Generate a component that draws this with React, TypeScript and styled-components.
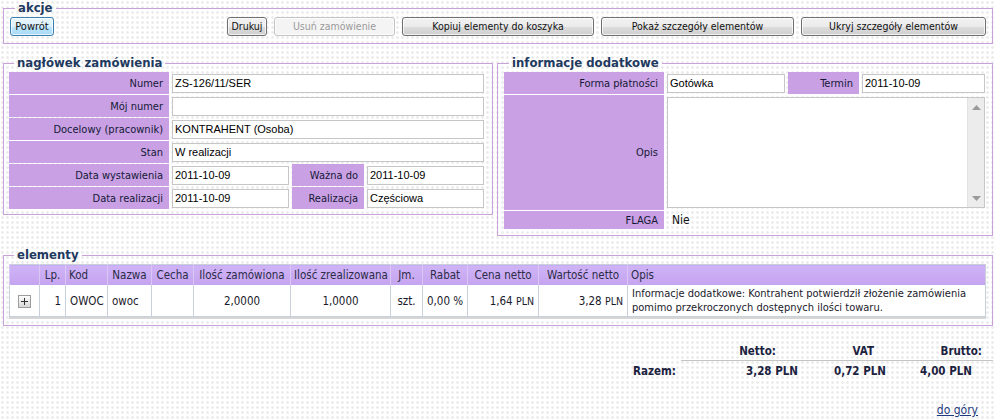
import React from 'react';
import styled, { createGlobalStyle } from 'styled-components';

const GlobalStyle = createGlobalStyle`
  html, body {
    margin: 0;
    padding: 0;
  }
  body {
    background-color: #ffffff;
    background-image: radial-gradient(circle, #ececec 1.1px, transparent 1.6px);
    background-size: 5px 5px;
    font-family: 'DejaVu Sans Condensed', 'DejaVu Sans', sans-serif;
    font-size: 11px;
    color: #1b2240;
  }
`;

const columns = [
  { title: '', w: 30 },
  { title: 'Lp.', w: 26 },
  { title: 'Kod', w: 42 },
  { title: 'Nazwa', w: 44 },
  { title: 'Cecha', w: 42 },
  { title: 'Ilość zamówiona', w: 97 },
  { title: 'Ilość zrealizowana', w: 100 },
  { title: 'Jm.', w: 32 },
  { title: 'Rabat', w: 45 },
  { title: 'Cena netto', w: 71 },
  { title: 'Wartość netto', w: 89 },
  { title: 'Opis', w: 358 },
];

const App: React.FC = () => {
  return (
    <Page>
      <GlobalStyle />

      <Group>
        <Caption>akcje</Caption>
        <Toolbar>
          <Button $w={44} $variant="focus">Powrót</Button>
          <Button $w={40} $push>Drukuj</Button>
          <Button $w={121} $variant="disabled">Usuń zamówienie</Button>
          <Button $w={192}>Kopiuj elementy do koszyka</Button>
          <Button $w={193}>Pokaż szczegóły elementów</Button>
          <Button $w={185}>Ukryj szczegóły elementów</Button>
        </Toolbar>
      </Group>

      <FormsRow>
        <Group $w={490} $pad="1px 8px 5px 5px">
          <Caption>nagłówek zamówienia</Caption>
          <FormGrid $cols="160px 117px 72px 1fr" $rows="repeat(6, 22px)">
            <Label>Numer</Label>
            <Field $span={3}><Input>ZS-126/11/SER</Input></Field>
            <Label>Mój numer</Label>
            <Field $span={3}><Input /></Field>
            <Label>Docelowy (pracownik)</Label>
            <Field $span={3}><Input>KONTRAHENT (Osoba)</Input></Field>
            <Label>Stan</Label>
            <Field $span={3}><Input>W realizacji</Input></Field>
            <Label>Data wystawienia</Label>
            <Field><Input>2011-10-09</Input></Field>
            <Label>Ważna do</Label>
            <Field><Input>2011-10-09</Input></Field>
            <Label>Data realizacji</Label>
            <Field><Input>2011-10-09</Input></Field>
            <Label>Realizacja</Label>
            <Field><Input>Częściowa</Input></Field>
          </FormGrid>
        </Group>

        <Group $w={496} $pad="1px 7px 6px 6px">
          <Caption>informacje dodatkowe</Caption>
          <FormGrid $cols="160px 118px 71px 1fr" $rows="22px 115px 18px">
            <Label>Forma płatności</Label>
            <Field><Input>Gotówka</Input></Field>
            <Label>Termin</Label>
            <Field><Input>2011-10-09</Input></Field>
            <Label>Opis</Label>
            <Field $span={3}>
              <TextBox>
                <TextContent />
                <ScrollTrack>
                  <svg width="9" height="5" viewBox="0 0 9 5"><path d="M0 5 L4.5 0 L9 5 Z" fill="#9a9a9a" /></svg>
                  <svg width="9" height="5" viewBox="0 0 9 5"><path d="M0 0 L4.5 5 L9 0 Z" fill="#9a9a9a" /></svg>
                </ScrollTrack>
              </TextBox>
            </Field>
            <Label>FLAGA</Label>
            <Plain $span={3}>Nie</Plain>
          </FormGrid>
        </Group>
      </FormsRow>

      <Group $top={11} $pad="1px 6px 8px 5px">
        <Caption>elementy</Caption>
        <Table>
          <colgroup>
            {columns.map((c, i) => (
              <col key={i} style={{ width: c.w }} />
            ))}
          </colgroup>
          <thead>
            <tr>
              {columns.map((c, i) => (
                <Th key={i} $left={c.title === 'Opis' || c.title === 'Kod'}>{c.title}</Th>
              ))}
            </tr>
          </thead>
          <tbody>
            <tr>
              <Td $align="center">
                <Expand>
                  <svg width="7" height="7" viewBox="0 0 7 7"><path d="M3.5 0 V7 M0 3.5 H7" stroke="#333" strokeWidth="1" /></svg>
                </Expand>
              </Td>
              <Td $align="right">1</Td>
              <Td>OWOC</Td>
              <Td>owoc</Td>
              <Td />
              <Td $align="center">2,0000</Td>
              <Td $align="center">1,0000</Td>
              <Td $align="center">szt.</Td>
              <Td $align="center">0,00 %</Td>
              <Td $align="right">1,64 <Cur>PLN</Cur></Td>
              <Td $align="right">3,28 <Cur>PLN</Cur></Td>
              <Td $note>
                Informacje dodatkowe: Kontrahent potwierdził złożenie zamówienia
                <br />
                pomimo przekroczonych dostępnych ilości towaru.
              </Td>
            </tr>
          </tbody>
        </Table>
      </Group>

      <Totals>
        <span />
        <TotalHead $pr={25}>Netto:</TotalHead>
        <TotalHead $pr={17}>VAT</TotalHead>
        <TotalHead $pr={11}>Brutto:</TotalHead>
        <TotalLabel>Razem:</TotalLabel>
        <TotalValue $pr={3}>3,28 PLN</TotalValue>
        <TotalValue $pr={5}>0,72 PLN</TotalValue>
        <TotalValue $pr={21}>4,00 PLN</TotalValue>
      </Totals>

      <Footer>
        <TopLink href="#">do góry</TopLink>
      </Footer>
    </Page>
  );
};

const Page = styled.div`
  padding: 0 2px 0 3px;
  width: 990px;
`;

const Group = styled.fieldset<{ $w?: number; $pad?: string; $top?: number }>`
  margin: ${(p) => p.$top ?? 0}px 0 0 0;
  border: 1px solid #c9a2d9;
  padding: ${(p) => p.$pad ?? '1px 6px 7px 6px'};
  min-width: 0;
  width: ${(p) => (p.$w ? `${p.$w}px` : 'auto')};
  box-sizing: border-box;
`;

const Caption = styled.legend`
  margin-left: 5px;
  padding: 0 3px;
  font-weight: bold;
  font-size: 13px;
  line-height: 16px;
  color: #1f3a60;
`;

const Toolbar = styled.div`
  display: flex;
  gap: 7px;
`;

const Button = styled.button<{ $w: number; $variant?: 'focus' | 'disabled'; $push?: boolean }>`
  width: ${(p) => p.$w}px;
  height: 19px;
  margin-left: ${(p) => (p.$push ? 'auto' : '0')};
  padding: 0;
  border-radius: 3px;
  font-family: 'DejaVu Sans Condensed', 'DejaVu Sans', sans-serif;
  font-size: ${(p) => (p.$variant === 'focus' ? '11px' : '10.5px')};
  line-height: 17px;
  color: ${(p) => (p.$variant === 'disabled' ? '#9a9a9a' : '#111')};
  border: 1px solid
    ${(p) => (p.$variant === 'focus' ? '#3c7fb1' : p.$variant === 'disabled' ? '#c2c4c6' : '#707070')};
  background: ${(p) =>
    p.$variant === 'focus'
      ? 'linear-gradient(#eaf6fd 0%, #d9f0fc 50%, #bee6fd 51%, #a7d9f5 100%)'
      : p.$variant === 'disabled'
        ? '#f4f4f4'
        : 'linear-gradient(#f2f2f2 0%, #ebebeb 50%, #dddddd 51%, #cfcfcf 100%)'};
  box-shadow: inset 0 0 0 1px rgba(255, 255, 255, 0.7);
`;

const FormsRow = styled.div`
  display: flex;
  gap: 4px;
  align-items: flex-start;
  margin-top: 11px;
`;

const FormGrid = styled.div<{ $cols: string; $rows: string }>`
  display: grid;
  grid-template-columns: ${(p) => p.$cols};
  grid-template-rows: ${(p) => p.$rows};
  column-gap: 3px;
  row-gap: 1px;
`;

const Label = styled.div`
  background: #c9a0e4;
  display: flex;
  align-items: center;
  justify-content: flex-end;
  padding-right: 6px;
  white-space: nowrap;
  color: #141a36;
`;

const Field = styled.div<{ $span?: number }>`
  grid-column: span ${(p) => p.$span ?? 1};
  display: flex;
  align-items: center;
`;

const Plain = styled(Field)`
  padding-left: 5px;
  font-size: 12px;
  color: #111;
`;

const Input = styled.div`
  box-sizing: border-box;
  width: 100%;
  height: 19px;
  border: 1px solid #c6c6c6;
  background: #fff;
  padding: 0 2px;
  font-family: 'Liberation Sans', Arial, sans-serif;
  font-size: 11px;
  line-height: 17px;
  color: #000;
  white-space: nowrap;
  overflow: hidden;
`;

const TextBox = styled.div`
  box-sizing: border-box;
  width: 100%;
  height: 111px;
  border: 1px solid #c6c6c6;
  background: #fff;
  display: flex;
`;

const TextContent = styled.div`
  flex: 1;
`;

const ScrollTrack = styled.div`
  width: 16px;
  background: #ececec;
  border-left: 1px solid #e2e2e2;
  display: flex;
  flex-direction: column;
  justify-content: space-between;
  align-items: center;
  padding: 7px 0 6px;
`;

const Table = styled.table`
  border-collapse: collapse;
  table-layout: fixed;
  width: 976px;
  border: 1px solid #c8d0dc;
  box-shadow: 0 2px 0 #d6d6d6;
  background: #fff;
`;

const Th = styled.th<{ $left?: boolean }>`
  height: 20px;
  padding: 0 3px;
  font-weight: normal;
  font-size: 11.5px;
  color: #2c2c48;
  text-align: ${(p) => (p.$left ? 'left' : 'center')};
  white-space: nowrap;
  overflow: hidden;
  background: linear-gradient(#cfb3f6, #c5a4ef);
  border-left: 1px solid #d9c8f3;
`;

const Td = styled.td<{ $align?: string; $note?: boolean }>`
  height: 31px;
  padding: ${(p) => (p.$note ? '0 0 0 4px' : '0 4px')};
  font-size: ${(p) => (p.$note ? '11px' : '11.5px')};
  line-height: 14px;
  color: #1a1a2a;
  text-align: ${(p) => p.$align ?? 'left'};
  white-space: nowrap;
  overflow: hidden;
  border-left: 1px solid #c8d0dc;
  vertical-align: middle;
`;

const Cur = styled.span`
  font-size: 10.5px;
`;

const Expand = styled.span`
  display: inline-flex;
  align-items: center;
  justify-content: center;
  width: 11px;
  height: 11px;
  border: 1px solid #9c9c9c;
  background: linear-gradient(#fdfdfd, #d8d8d8);
  vertical-align: middle;
`;

const Totals = styled.div`
  display: grid;
  grid-template-columns: 48px 120px 90px 102px;
  margin: 17px 0 0 auto;
  width: 360px;
  font-weight: bold;
  font-size: 11.5px;
`;

const TotalHead = styled.div<{ $pr: number }>`
  text-align: right;
  padding-right: ${(p) => p.$pr}px;
  line-height: 17px;
  border-bottom: 1px solid #c4c4c4;
`;

const TotalLabel = styled.div`
  line-height: 18px;
  padding-top: 1px;
`;

const TotalValue = styled.div<{ $pr: number }>`
  text-align: right;
  padding-right: ${(p) => p.$pr}px;
  line-height: 18px;
  padding-top: 1px;
`;

const Footer = styled.div`
  text-align: right;
  padding-right: 15px;
  margin-top: 22px;
`;

const TopLink = styled.a`
  font-size: 12px;
  line-height: 16px;
  color: #1f3a80;
  text-decoration: underline;
`;

export default App;
